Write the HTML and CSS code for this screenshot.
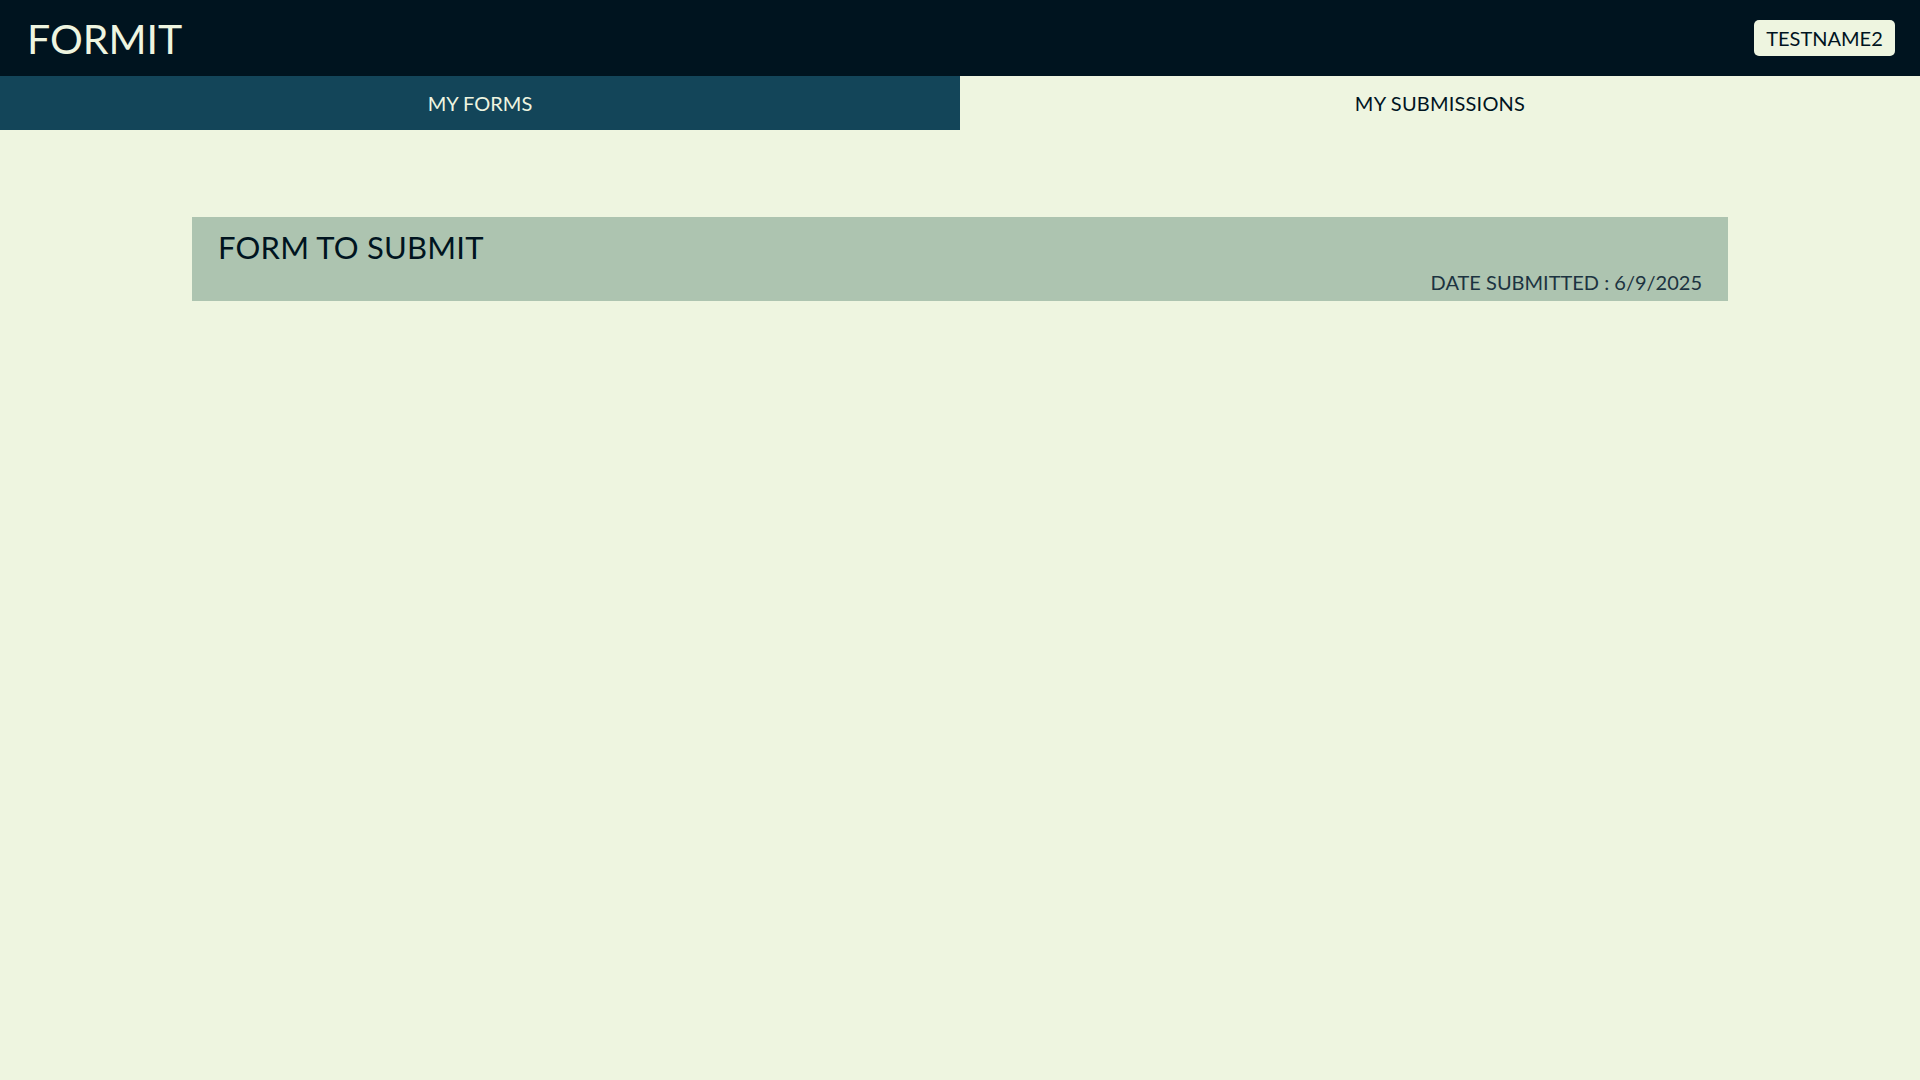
FILE: index.html
```html
<!DOCTYPE html>
<html lang="en">
<head>
<meta charset="utf-8">
<title>FormIt</title>
<link rel="stylesheet" href="styles.css">
</head>
<body>
<header class="topbar">
  <h1 class="brand">FORMIT</h1>
  <button class="user-btn">TESTNAME2</button>
</header>
<nav class="tabs">
  <div class="tab tab-active">MY FORMS</div>
  <div class="tab">MY SUBMISSIONS</div>
</nav>
<main class="content">
  <section class="card">
    <h2 class="card-title">FORM TO SUBMIT</h2>
    <div class="card-date">DATE SUBMITTED : 6/9/2025</div>
  </section>
</main>
</body>
</html>
```
FILE: styles.css
```css
* { box-sizing: border-box; }
html, body { margin: 0; padding: 0; }
body {
  background: #eef5e0;
  font-family: Lato, "Open Sans", sans-serif;
  color: #00141f;
  min-height: 1080px;
}
.topbar {
  height: 76px;
  background: #00141f;
  display: flex;
  align-items: center;
  justify-content: space-between;
  padding: 0 25px 0 27px;
}
.brand {
  margin: 0;
  font-weight: 400;
  font-size: 41px;
  color: #eef5e0;
  line-height: 1;
  padding-top: 0;
}
.user-btn {
  font-family: inherit;
  font-size: 20px;
  background: #eef5e0;
  color: #00141f;
  border: none;
  border-radius: 5px;
  height: 36px;
  width: 141px;
  padding: 0;
}
.tabs {
  display: flex;
  height: 54px;
}
.tab {
  flex: 1;
  display: flex;
  align-items: center;
  justify-content: center;
  font-size: 20px;
  color: #00141f;
}
.tab-active {
  background: #134559;
  color: #eef5e0;
}
.tab + .tab {
  letter-spacing: 0.2px;
}
.content {
  padding-top: 87px;
  display: flex;
  justify-content: center;
}
.card {
  width: 1536px;
  height: 84px;
  background: #adc4b0;
  padding: 12px 26px 7px 26px;
  display: flex;
  flex-direction: column;
}
.card-title {
  margin: 0;
  font-weight: 400;
  font-size: 31px;
  line-height: 36px;
  letter-spacing: 0.2px;
}
.card-date {
  margin-top: auto;
  align-self: flex-end;
  font-size: 20px;
  line-height: 24px;
  color: #1c3340;
}
```
